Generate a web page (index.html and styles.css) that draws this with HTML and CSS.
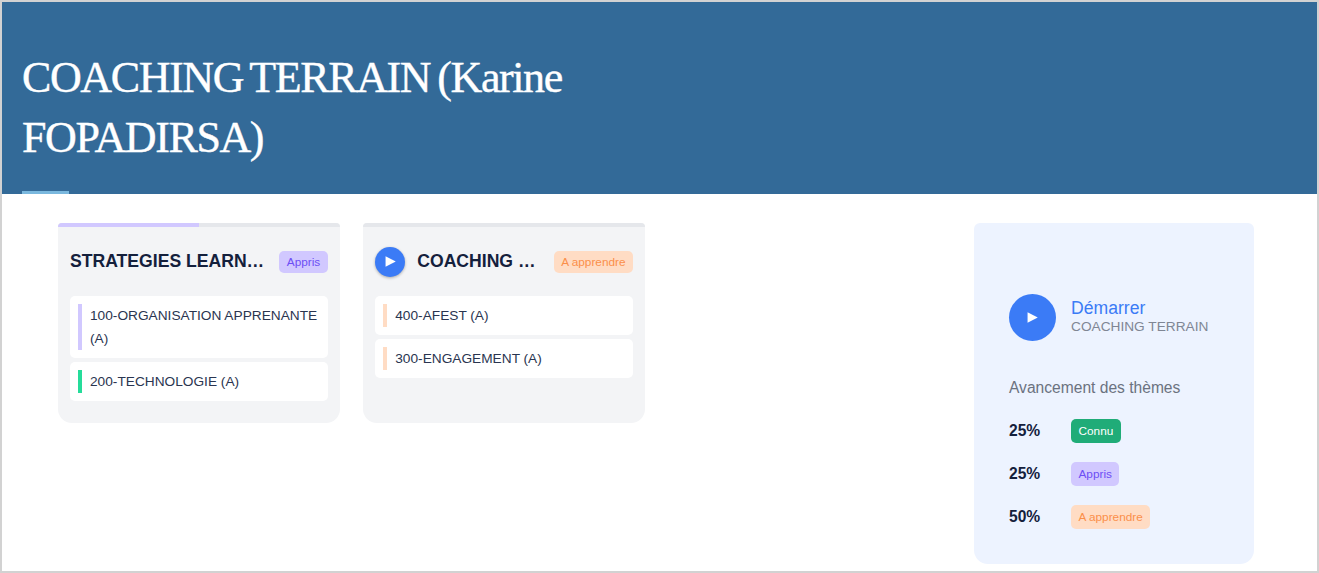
FILE: index.html
```html
<!DOCTYPE html>
<html>
  <head>
    <title>COACHING TERRAIN</title>
    <link rel="stylesheet" href="styles.css">
  </head>
  <body>
    <header class="banner">
      <h1>COACHING TERRAIN (Karine FOPADIRSA)</h1>
      <div class="banner-accent"></div>
    </header>

    <div class="content">
      <div class="cards">
        <div class="card">
          <div class="card-progress"><div class="card-progress-fill"></div></div>
          <div class="card-head">
            <div class="card-title">STRATEGIES LEARNING</div>
            <span class="badge badge-appris">Appris</span>
          </div>
          <div class="theme">
            <span class="theme-mark mark-appris"></span>
            <span class="theme-name">100-ORGANISATION APPRENANTE (A)</span>
          </div>
          <div class="theme">
            <span class="theme-mark mark-connu"></span>
            <span class="theme-name">200-TECHNOLOGIE (A)</span>
          </div>
        </div>

        <div class="card">
          <div class="card-progress"></div>
          <div class="card-head">
            <div class="play play-small">
              <svg width="11" height="11" viewBox="0 0 10 10"><path d="M0.5 0.2L9.8 5L0.5 9.8Z" fill="#fff"/></svg>
            </div>
            <div class="card-title">COACHING TERRAIN</div>
            <span class="badge badge-apprendre">A apprendre</span>
          </div>
          <div class="theme">
            <span class="theme-mark mark-apprendre"></span>
            <span class="theme-name">400-AFEST (A)</span>
          </div>
          <div class="theme">
            <span class="theme-mark mark-apprendre"></span>
            <span class="theme-name">300-ENGAGEMENT (A)</span>
          </div>
        </div>
      </div>

      <aside class="panel">
        <div class="start">
          <div class="play play-big">
            <svg width="11" height="11" viewBox="0 0 10 10"><path d="M0.5 0.2L9.8 5L0.5 9.8Z" fill="#fff"/></svg>
          </div>
          <div class="start-text">
            <div class="start-label">Démarrer</div>
            <div class="start-name">COACHING TERRAIN</div>
          </div>
        </div>
        <div class="stats-title">Avancement des thèmes</div>
        <div class="stat">
          <span class="stat-value">25%</span>
          <span class="badge badge-connu">Connu</span>
        </div>
        <div class="stat">
          <span class="stat-value">25%</span>
          <span class="badge badge-appris">Appris</span>
        </div>
        <div class="stat">
          <span class="stat-value">50%</span>
          <span class="badge badge-apprendre">A apprendre</span>
        </div>
      </aside>
    </div>
  </body>
</html>
```
FILE: styles.css
```css
* {
  box-sizing: border-box;
}

body {
  margin: 0;
  height: 573px;
  overflow: hidden;
  border: 2px solid #d2d2d2;
  background-color: white;
  font-family: "Liberation Sans", Arial, sans-serif;
}

.banner {
  background-color: #336a98;
  height: 192px;
  padding: 46px 20px 0;
}

h1 {
  margin: 0;
  width: 600px;
  height: 143px;
  color: white;
  font-family: "Liberation Serif", Georgia, serif;
  font-weight: normal;
  font-size: 44px;
  line-height: 60px;
  letter-spacing: -1.4px;
  word-spacing: -2.5px;
  -webkit-text-stroke: 0.4px white;
}

.banner-accent {
  width: 47px;
  height: 3px;
  background-color: #7ab8de;
}

.content {
  display: flex;
  justify-content: space-between;
  padding: 29px 63px 0 56px;
}

.cards {
  display: flex;
  align-items: flex-start;
  gap: 23.5px;
}

.card {
  width: 281.75px;
  height: 200px;
  background-color: #f3f4f6;
  border-radius: 4px 4px 14px 14px;
  overflow: hidden;
}

.card-progress {
  height: 4px;
  background-color: #e5e7eb;
}

.card-progress-fill {
  width: 50%;
  height: 4px;
  background-color: #d1c8ff;
}

.card-head {
  display: flex;
  align-items: center;
  height: 69px;
  padding: 0 12px;
}

.card-title {
  flex: 1;
  min-width: 0;
  overflow: hidden;
  white-space: nowrap;
  text-overflow: ellipsis;
  margin-right: 12px;
  color: #14203c;
  font-size: 17.6px;
  font-weight: bold;
}

.play {
  display: flex;
  align-items: center;
  justify-content: center;
  flex-shrink: 0;
  border-radius: 50%;
  background-color: #3b7bf6;
}

.play-small {
  width: 30px;
  height: 30px;
  margin-right: 12px;
  box-shadow: 0 1px 3px rgba(0, 0, 0, 0.3);
}

.play-big {
  width: 47px;
  height: 47px;
  margin-right: 15px;
}

.badge {
  display: inline-block;
  flex-shrink: 0;
  padding: 0 7.5px;
  height: 22px;
  line-height: 22px;
  border-radius: 5px;
  font-size: 11.8px;
  white-space: nowrap;
}

.badge-appris {
  background-color: #d1c8ff;
  color: #6d4ef5;
}

.badge-apprendre {
  background-color: #ffdcc4;
  color: #fb8f4a;
}

.badge-connu {
  background-color: #20ac78;
  color: white;
}

.theme {
  display: flex;
  margin: 0 12px 4px;
  padding: 8px;
  background-color: white;
  border-radius: 5px;
  color: #2a3550;
  font-size: 13.7px;
  line-height: 23px;
}

.theme-mark {
  flex-shrink: 0;
  width: 4px;
  margin-right: 8px;
}

.mark-appris {
  background-color: #d1c8ff;
}

.mark-connu {
  background-color: #25dc9a;
}

.mark-apprendre {
  background-color: #ffdcc4;
}

.panel {
  width: 280px;
  height: 341px;
  padding: 71px 35px 0;
  background-color: #edf3ff;
  border-radius: 6px 6px 14px 14px;
}

.start {
  display: flex;
  align-items: center;
  margin-bottom: 37px;
}

.start-text {
  padding-bottom: 2px;
}

.start-label {
  color: #3b7bf6;
  font-size: 17.6px;
  line-height: 20px;
}

.start-name {
  color: #7f8694;
  font-size: 13.7px;
  line-height: 18px;
}

.stats-title {
  color: #6b7280;
  font-size: 15.6px;
  line-height: 20px;
  margin-bottom: 21px;
}

.stat {
  display: flex;
  align-items: center;
  height: 24px;
  margin-bottom: 19px;
}

.stat-value {
  width: 62px;
  color: #14203c;
  font-size: 15.6px;
  font-weight: bold;
}

.stat .badge {
  height: 24px;
  line-height: 24px;
}
```
